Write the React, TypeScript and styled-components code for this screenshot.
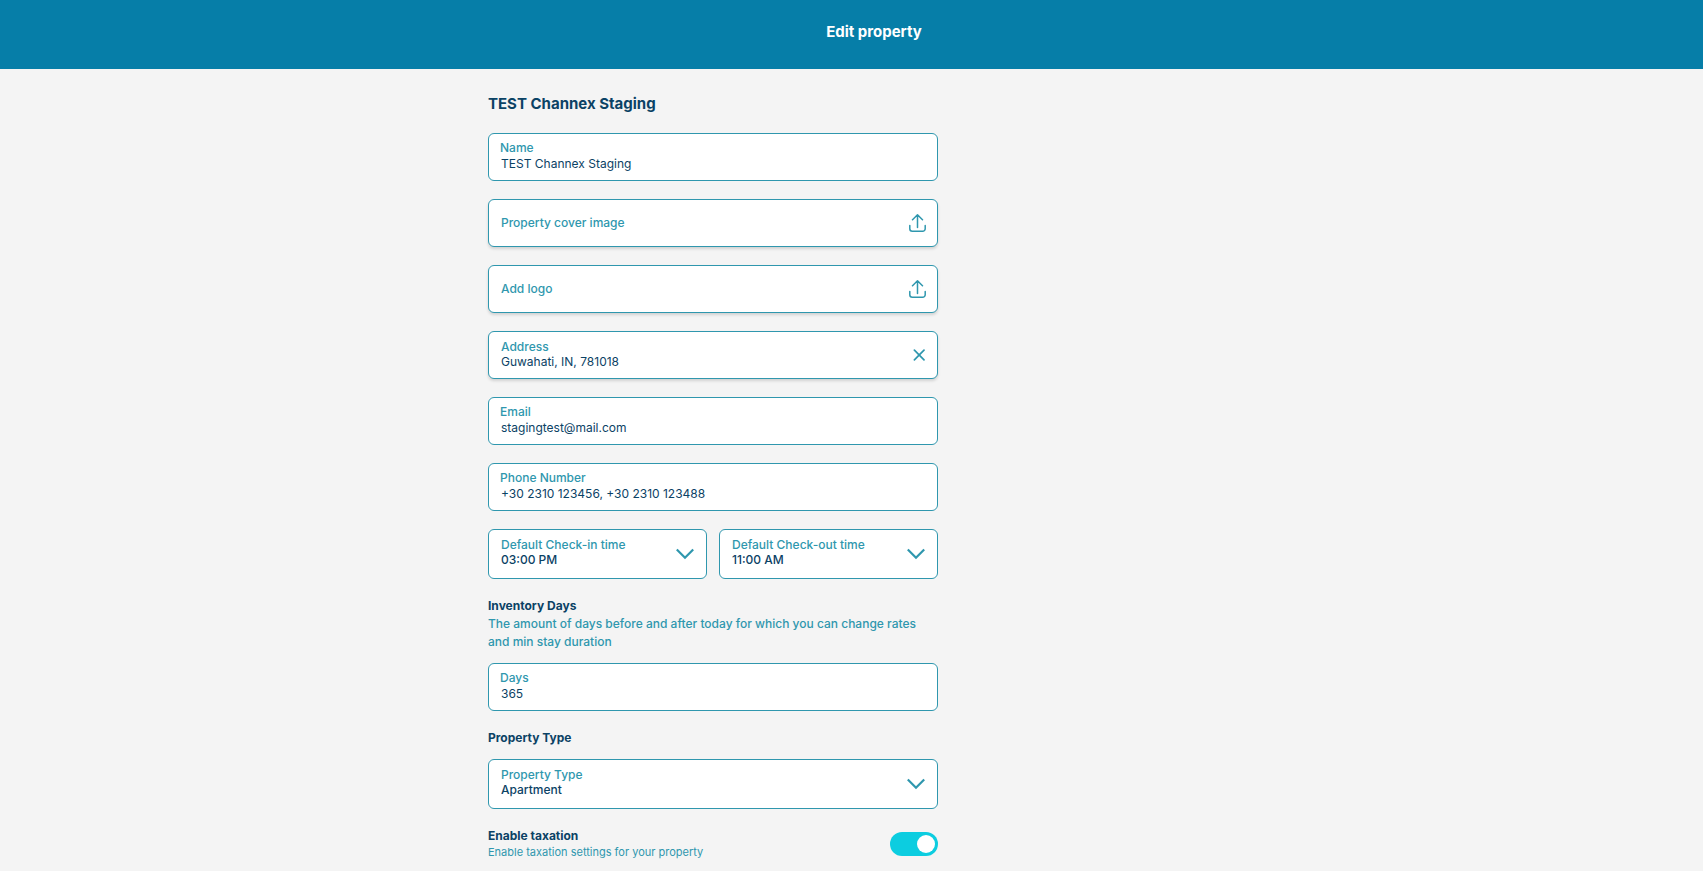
import React, { useState } from "react";
import styled, { createGlobalStyle } from "styled-components";

const color = {
  header: "#067ea8",
  page: "#f4f4f4",
  teal: "#2f97ae",
  navy: "#0b4265",
  accent: "#0ccde0",
};

const GlobalStyle = createGlobalStyle`
  *, *::before, *::after { box-sizing: border-box; }
  html { background: ${color.page}; overflow-x: hidden; }
  body {
    margin: 0;
    background: ${color.page};
    color: ${color.navy};
    font-family: Inter, "Liberation Sans", sans-serif;
    font-size: 12px;
    line-height: 18px;
  }
  button, input, select { font: inherit; color: inherit; margin: 0; }
`;

const Header = styled.header`
  display: flex;
  justify-content: center;
  background: ${color.header};
  padding: 20px 0 25px;
`;

const HeaderInner = styled.div`
  width: 100%;
  max-width: 727px;
  padding-left: 45px;
  text-align: center;
`;

const PageTitle = styled.h1`
  margin: 0;
  color: #fff;
  font-size: 15px;
  line-height: 24px;
  font-weight: 700;
`;

const Main = styled.main`
  width: 100%;
  max-width: 727px;
  margin: 0 auto;
`;

const Form = styled.form`
  display: flex;
  flex-direction: column;
  gap: 18px;
  width: 100%;
  max-width: 450px;
  padding: 23px 0 0;
`;

const PropertyName = styled.h2`
  margin: 0;
  font-size: 15px;
  line-height: 23px;
  font-weight: 700;
`;

const Box = styled.div<{ $raised?: boolean; $tall?: boolean }>`
  display: flex;
  align-items: center;
  justify-content: space-between;
  flex: 1 1 0;
  min-width: 0;
  min-height: ${(p) => (p.$tall ? 50 : 48)}px;
  padding: 0 12px;
  border: 1px solid ${color.teal};
  border-radius: 6px;
  background: #fff;
  box-shadow: ${(p) => (p.$raised ? "0 2px 3px rgba(0, 0, 0, 0.14)" : "none")};
`;

const PlainBox = styled(Box)`
  padding: 0 11px;
`;

const FieldText = styled.div<{ $gap?: number; $bottom: number }>`
  display: flex;
  flex-direction: column;
  gap: ${(p) => p.$gap ?? 0}px;
  flex: 1;
  min-width: 0;
  padding-bottom: ${(p) => p.$bottom}px;
`;

const Label = styled.label`
  color: ${color.teal};
  font-weight: 500;
  line-height: 15px;
`;

const Input = styled.input`
  width: 100%;
  height: 15px;
  padding: 0;
  border: 0;
  outline: 0;
  background: transparent;
  line-height: 15px;
`;

const PlainInput = styled(Input)`
  padding: 0 1px;
`;

const Select = styled.select`
  appearance: none;
  width: 100%;
  height: 15px;
  padding: 0;
  border: 0;
  outline: 0;
  background: transparent;
  font-weight: 500;
  line-height: 15px;
`;

const UploadButton = styled(Box).attrs({ as: "button", type: "button", $raised: true })`
  flex: none;
  padding: 0 11px 0 12px;
  color: ${color.teal};
  font-weight: 500;
  text-align: left;
  cursor: pointer;
`;

const ClearButton = styled.button`
  display: flex;
  padding: 0;
  border: 0;
  background: transparent;
  color: ${color.teal};
  cursor: pointer;
`;

const Icon = styled.svg`
  flex: none;
  fill: none;
  color: ${color.teal};
  stroke: currentColor;
  pointer-events: none;
`;

const Pair = styled.div`
  display: flex;
  gap: 12px;
`;

const Section = styled.section`
  display: flex;
  flex-direction: column;
  gap: 12px;
`;

const SectionTitle = styled.h3`
  margin: 0;
  font-size: 12px;
  line-height: 18px;
  font-weight: 700;
`;

const Hint = styled.p`
  margin: 0;
  color: ${color.teal};
  font-weight: 500;
`;

const SwitchRow = styled.div`
  display: flex;
  align-items: center;
  justify-content: space-between;
`;

const SwitchLabel = styled.label`
  display: block;
  font-weight: 700;
  line-height: 18px;
`;

const SmallHint = styled.p`
  margin: 0;
  color: ${color.teal};
  font-size: 11px;
  line-height: 15px;
`;

const Switch = styled.input`
  appearance: none;
  flex: none;
  display: flex;
  justify-content: flex-start;
  width: 48px;
  height: 24px;
  margin: 0;
  padding: 3px;
  border-radius: 12px;
  background: #b5c3ca;
  cursor: pointer;

  &::before {
    content: "";
    width: 18px;
    height: 18px;
    border-radius: 50%;
    background: #fff;
  }

  &:checked {
    justify-content: flex-end;
    background: ${color.accent};
  }
`;

const UploadIcon = () => (
  <Icon width="17" height="18" viewBox="0 0 17 18" strokeWidth="1.5" strokeLinecap="round" strokeLinejoin="round" aria-hidden="true">
    <path d="M8.5 13.4V1.2M3.5 5.8l5-5 5 5M.8 11.5v3.2a2.5 2.5 0 0 0 2.5 2.5h10.4a2.5 2.5 0 0 0 2.5-2.5v-3.2" />
  </Icon>
);

const ChevronIcon = () => (
  <Icon width="18" height="12" viewBox="0 0 18 12" strokeWidth="2.2" aria-hidden="true">
    <path d="M.8 1.5 9 9.7l8.2-8.2" />
  </Icon>
);

const CloseIcon = () => (
  <Icon width="12" height="12" viewBox="0 0 12 12" strokeWidth="1.7" strokeLinecap="round" aria-hidden="true">
    <path d="m1.4 1.2 9.6 9.6M11 1.2l-9.6 9.6" />
  </Icon>
);

interface TextFieldProps {
  id: string;
  label: string;
  value: string;
  type?: string;
}

function TextField({ id, label, value, type = "text" }: TextFieldProps) {
  return (
    <PlainBox>
      <FieldText $gap={1} $bottom={4}>
        <Label htmlFor={id}>{label}</Label>
        <PlainInput id={id} type={type} defaultValue={value} />
      </FieldText>
    </PlainBox>
  );
}

interface SelectFieldProps {
  id: string;
  label: string;
  options: string[];
}

function SelectField({ id, label, options }: SelectFieldProps) {
  return (
    <Box $tall>
      <FieldText $bottom={4}>
        <Label htmlFor={id}>{label}</Label>
        <Select id={id}>
          {options.map((option) => (
            <option key={option}>{option}</option>
          ))}
        </Select>
      </FieldText>
      <ChevronIcon />
    </Box>
  );
}

export default function App() {
  const [address, setAddress] = useState("Guwahati, IN, 781018");
  const [taxation, setTaxation] = useState(true);

  return (
    <>
      <GlobalStyle />
      <Header>
        <HeaderInner>
          <PageTitle>Edit property</PageTitle>
        </HeaderInner>
      </Header>
      <Main>
        <Form>
          <PropertyName>TEST Channex Staging</PropertyName>
          <TextField id="name" label="Name" value="TEST Channex Staging" />
          <UploadButton>
            Property cover image
            <UploadIcon />
          </UploadButton>
          <UploadButton>
            Add logo
            <UploadIcon />
          </UploadButton>
          <Box $raised>
            <FieldText $bottom={2}>
              <Label htmlFor="address">Address</Label>
              <Input id="address" value={address} onChange={(e) => setAddress(e.target.value)} />
            </FieldText>
            <ClearButton type="button" aria-label="Clear address" onClick={() => setAddress("")}>
              <CloseIcon />
            </ClearButton>
          </Box>
          <TextField id="email" label="Email" type="email" value="stagingtest@mail.com" />
          <TextField id="phone" label="Phone Number" value="+30 2310 123456, +30 2310 123488" />
          <Pair>
            <SelectField id="check-in" label="Default Check-in time" options={["03:00 PM"]} />
            <SelectField id="check-out" label="Default Check-out time" options={["11:00 AM"]} />
          </Pair>
          <Section>
            <div>
              <SectionTitle>Inventory Days</SectionTitle>
              <Hint>
                The amount of days before and after today for which you can change rates and min stay duration
              </Hint>
            </div>
            <TextField id="days" label="Days" value="365" />
          </Section>
          <Section>
            <SectionTitle>Property Type</SectionTitle>
            <SelectField id="property-type" label="Property Type" options={["Apartment"]} />
          </Section>
          <SwitchRow>
            <div>
              <SwitchLabel htmlFor="taxation">Enable taxation</SwitchLabel>
              <SmallHint>Enable taxation settings for your property</SmallHint>
            </div>
            <Switch
              id="taxation"
              type="checkbox"
              role="switch"
              checked={taxation}
              onChange={(e) => setTaxation(e.target.checked)}
            />
          </SwitchRow>
        </Form>
      </Main>
    </>
  );
}
